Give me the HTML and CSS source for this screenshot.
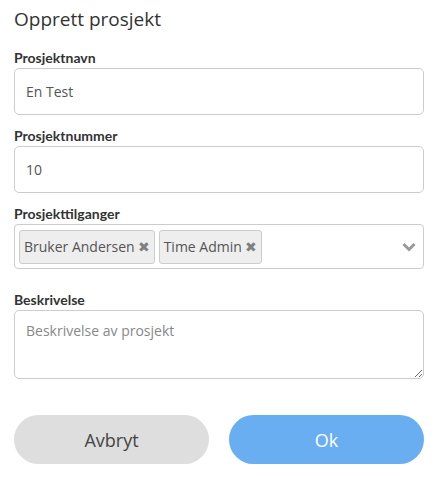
FILE: index.html
```html
<!DOCTYPE html>
<html lang="no">
<head>
<meta charset="utf-8">
<link rel="stylesheet" href="styles.css">
</head>
<body>
<div class="dialog">
  <h1 class="title">Opprett prosjekt</h1>
  <div class="field">
    <label class="label">Prosjektnavn</label>
    <div class="input">En Test</div>
  </div>
  <div class="field">
    <label class="label">Prosjektnummer</label>
    <div class="input">10</div>
  </div>
  <div class="field">
    <label class="label">Prosjekttilganger</label>
    <div class="select">
      <div class="tags">
        <span class="tag">Bruker Andersen <span class="x">✖</span></span>
        <span class="tag">Time Admin <span class="x">✖</span></span>
      </div>
      <svg class="chev" width="14" height="10" viewBox="0 0 14 10"><path d="M1.5 2 L7 7.5 L12.5 2" fill="none" stroke="#999" stroke-width="3"/></svg>
    </div>
  </div>
  <div class="field desc">
    <label class="label">Beskrivelse</label>
    <textarea class="textarea" placeholder="Beskrivelse av prosjekt"></textarea>
  </div>
  <div class="buttons">
    <button class="btn cancel">Avbryt</button>
    <button class="btn ok">Ok</button>
  </div>
</div>
</body>
</html>
```
FILE: styles.css
```css
* { box-sizing: border-box; }
body { margin: 0; background: #fff; font-family: "Open Sans", "Noto Sans", sans-serif; color: #333; }
.dialog { padding: 6px 15px 0 14px; display: flex; flex-direction: column; }
.title { margin: 0 0 18px; font-size: 19px; font-weight: 400; color: #333; line-height: 26px; }
.field { display: flex; flex-direction: column; margin-bottom: 13px; }
.label { font-family: "Lato", sans-serif; font-size: 14px; font-weight: 700; color: #333; line-height: 16px; margin-bottom: 2px; }
.input { height: 47px; border: 1px solid #ccc; border-radius: 5px; padding: 0 11px; display: flex; align-items: center; font-size: 14px; color: #555; }
.select { height: 45px; border: 1px solid #ccc; border-radius: 4px; padding: 0 7px 0 4px; display: flex; align-items: center; justify-content: space-between; }
.tags { display: flex; gap: 4px; }
.tag { height: 34px; padding: 0 4px; border: 1px solid #ccc; border-radius: 3px; background: #eee; display: flex; align-items: center; font-size: 14px; color: #555; gap: 3px; }
.x { font-size: 14px; color: #808080; }
.desc { margin-top: 10px; margin-bottom: 36px; }
.textarea { height: 69px; border: 1px solid #ccc; border-radius: 5px; padding: 10px 11px; font-family: inherit; font-size: 14px; color: #555; resize: vertical; display: block; width: 100%; }
.textarea::placeholder { color: #888; }
.buttons { display: flex; gap: 20px; }
.btn { flex: 1; height: 49px; border: none; border-radius: 25px; font-family: inherit; font-size: 18px; }
.cancel { background: #dedede; color: #444; }
.ok { background: #6aaef2; color: #fff; }
```
